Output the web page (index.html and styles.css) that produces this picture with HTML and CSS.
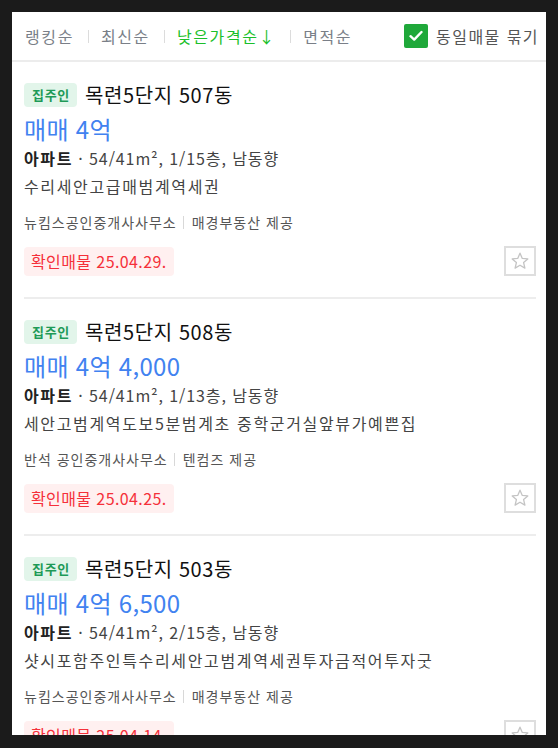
FILE: index.html
```html
<!DOCTYPE html>
<html lang="ko">
<head>
<meta charset="utf-8">
<link rel="stylesheet" href="styles.css">
</head>
<body>
<div class="panel">
  <div class="sortbar">
    <div class="tabs">
      <span class="tab">랭킹순</span><span class="sep"></span>
      <span class="tab">최신순</span><span class="sep"></span>
      <span class="tab active">낮은가격순↓</span><span class="sep"></span>
      <span class="tab">면적순</span>
    </div>
    <label class="group">
      <span class="check"><svg width="14" height="12" viewBox="0 0 14 12"><path d="M1.5 6.2 L5.2 9.6 L12.5 2" fill="none" stroke="#fff" stroke-width="2.4" stroke-linecap="round" stroke-linejoin="round"/></svg></span>
      <span>동일매물 묶기</span>
    </label>
  </div>

  <div class="item">
    <div class="head"><span class="tag">집주인</span><span class="title">목련5단지 507동</span></div>
    <div class="price">매매 4억</div>
    <div class="spec"><b>아파트</b> · 54/41m², 1/15층, 남동향</div>
    <div class="desc">수리세안고급매범계역세권</div>
    <div class="agent"><span>뉴킴스공인중개사사무소</span><span class="vbar"></span><span>매경부동산 제공</span></div>
    <div class="foot"><span class="verified">확인매물 25.04.29.</span><span class="star"><svg width="20" height="20" viewBox="0 0 20 20"><path d="M10 2.2 L12.3 7.4 L17.8 7.9 L13.6 11.6 L14.9 17.1 L10 14.2 L5.1 17.1 L6.4 11.6 L2.2 7.9 L7.7 7.4 Z" fill="none" stroke="#c4c4c4" stroke-width="1.3" stroke-linejoin="round"/></svg></span></div>
  </div>

  <div class="item">
    <div class="head"><span class="tag">집주인</span><span class="title">목련5단지 508동</span></div>
    <div class="price">매매 4억 4,000</div>
    <div class="spec"><b>아파트</b> · 54/41m², 1/13층, 남동향</div>
    <div class="desc">세안고범계역도보5분범계초 중학군거실앞뷰가예쁜집</div>
    <div class="agent"><span>반석 공인중개사사무소</span><span class="vbar"></span><span>텐컴즈 제공</span></div>
    <div class="foot"><span class="verified">확인매물 25.04.25.</span><span class="star"><svg width="20" height="20" viewBox="0 0 20 20"><path d="M10 2.2 L12.3 7.4 L17.8 7.9 L13.6 11.6 L14.9 17.1 L10 14.2 L5.1 17.1 L6.4 11.6 L2.2 7.9 L7.7 7.4 Z" fill="none" stroke="#c4c4c4" stroke-width="1.3" stroke-linejoin="round"/></svg></span></div>
  </div>

  <div class="item">
    <div class="head"><span class="tag">집주인</span><span class="title">목련5단지 503동</span></div>
    <div class="price">매매 4억 6,500</div>
    <div class="spec"><b>아파트</b> · 54/41m², 2/15층, 남동향</div>
    <div class="desc">샷시포함주인특수리세안고범계역세권투자금적어투자굿</div>
    <div class="agent"><span>뉴킴스공인중개사사무소</span><span class="vbar"></span><span>매경부동산 제공</span></div>
    <div class="foot"><span class="verified">확인매물 25.04.14.</span><span class="star"><svg width="20" height="20" viewBox="0 0 20 20"><path d="M10 2.2 L12.3 7.4 L17.8 7.9 L13.6 11.6 L14.9 17.1 L10 14.2 L5.1 17.1 L6.4 11.6 L2.2 7.9 L7.7 7.4 Z" fill="none" stroke="#c4c4c4" stroke-width="1.3" stroke-linejoin="round"/></svg></span></div>
  </div>
</div>
</body>
</html>
```

FILE: styles.css
```css
* { box-sizing: border-box; }
html, body { margin: 0; padding: 0; }
body {
  background: #1b1b1b;
  padding: 12px 12px 13px 12px;
  font-family: "Noto Sans CJK KR", "Noto Sans", sans-serif;
  color: #222;
}
.panel {
  width: 534px;
  height: 723px;
  background: #fff;
  overflow: hidden;
}
.sortbar {
  height: 50px;
  border-bottom: 2px solid #ececec;
  display: flex;
  align-items: center;
  justify-content: space-between;
  padding: 0 7px 0 13px;
}
.tabs {
  display: flex;
  align-items: center;
  font-size: 16px;
  line-height: 22px;
  color: #7a7f88;
  letter-spacing: 1.6px;
}
.tab.active { color: #1bbf2a; }
.sep {
  width: 1px;
  height: 13px;
  background: #dcdcdc;
  margin: 0 12px 0 14px;
}
.group {
  display: flex;
  align-items: center;
  gap: 8px;
  font-size: 16px;
  line-height: 22px;
  color: #555;
  letter-spacing: 1.45px;
}
.check {
  width: 24px;
  height: 24px;
  background: #1fa83a;
  border-radius: 2px;
  display: flex;
  align-items: center;
  justify-content: center;
}
.item {
  margin: 0 10px 0 12px;
  padding: 20px 0 21px;
  border-bottom: 2px solid #ededed;
}
.head {
  display: flex;
  align-items: center;
  height: 26px;
  gap: 8px;
}
.tag {
  height: 24px;
  padding: 0 7px 0 8px;
  background: #e2f5ea;
  color: #1e9a57;
  border-radius: 4px;
  font-size: 13px;
  line-height: 24px;
  font-weight: 700;
  letter-spacing: 0.7px;
}
.title {
  font-size: 20px;
  line-height: 26px;
  color: #111;
  letter-spacing: 0.6px;
}
.price {
  margin-top: 6px;
  font-size: 24px;
  line-height: 30px;
  color: #4182f0;
  letter-spacing: 0.3px;
}
.spec {
  font-size: 16px;
  line-height: 28px;
  color: #444;
  letter-spacing: 0.9px;
}
.spec b { font-weight: 700; color: #222; letter-spacing: 1.6px; }
.desc {
  font-size: 16px;
  line-height: 28px;
  color: #444;
  letter-spacing: 1.65px;
}
.agent {
  margin-top: 8px;
  display: flex;
  align-items: center;
  font-size: 14px;
  line-height: 28px;
  color: #555;
  letter-spacing: 1px;
}
.vbar {
  width: 1px;
  height: 13px;
  background: #d8d8d8;
  margin: 0 8px 0 6px;
}
.foot {
  margin-top: 10px;
  display: flex;
  align-items: center;
  justify-content: space-between;
}
.verified {
  height: 29px;
  padding: 0 7px;
  background: #fff0f0;
  border-radius: 4px;
  color: #f5303a;
  font-size: 16px;
  line-height: 29px;
  letter-spacing: 0.4px;
}
.star {
  width: 32px;
  height: 30px;
  border: 2px solid #dedede;
  display: flex;
  align-items: center;
  justify-content: center;
}
```
